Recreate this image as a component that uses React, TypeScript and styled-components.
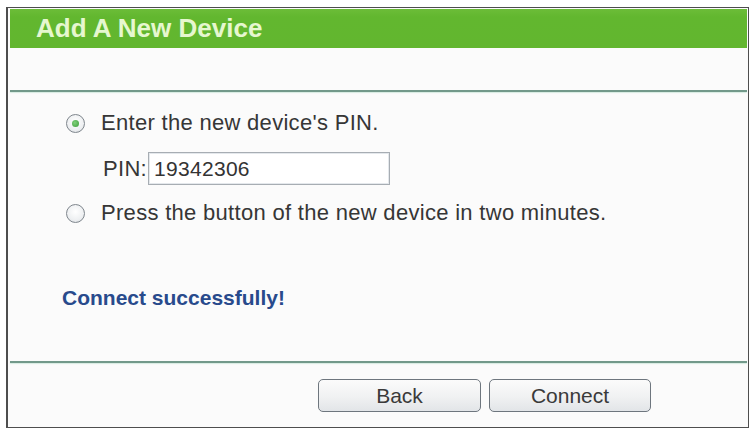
import React from "react";
import styled, { createGlobalStyle } from "styled-components";

const Global = createGlobalStyle`
  html, body { margin: 0; padding: 0; background: #ffffff; }
  body { font-family: "Liberation Sans", Arial, sans-serif; }
  * { box-sizing: border-box; }
`;

const Frame = styled.div`
  margin: 7px 0 0 6px;
  width: 743px;
  height: 421px;
  border: 1px solid #4e4e4e;
  border-left-width: 2px;
  padding: 1px 1px 0 2px;
  background: #fbfbfb;
  display: flex;
  flex-direction: column;
`;

const Header = styled.div`
  height: 39px;
  background: linear-gradient(#6cbd38, #62b72f 20%, #62b62f);
  display: flex;
  align-items: center;
  padding-left: 26px;
  color: #e6f7cf;
  font-size: 26px;
  font-weight: bold;
`;

const Spacer = styled.div`
  height: 42px;
`;

const Rule = styled.div`
  height: 2px;
  background: #72998a;
  box-shadow: 0 1px 1px rgba(150, 210, 180, 0.35);
`;

const Content = styled.div`
  height: 269px;
  padding: 16px 0 0 56px;
  display: flex;
  flex-direction: column;
  color: #363636;
  font-size: 22px;
  letter-spacing: 0.3px;
`;

const OptionRow = styled.label<{ $mt?: number }>`
  display: flex;
  align-items: center;
  gap: 16px;
  height: 30px;
  margin-top: ${(p) => p.$mt ?? 0}px;
  cursor: pointer;
`;

const Radio = styled.span<{ $checked?: boolean }>`
  width: 19px;
  height: 19px;
  border-radius: 50%;
  border: 1.5px solid #7f868d;
  background: radial-gradient(circle at 50% 40%, #ffffff 0%, #eef0f2 60%, #d6dade 100%);
  display: flex;
  align-items: center;
  justify-content: center;
  flex: none;
  &::after {
    content: "";
    width: 7px;
    height: 7px;
    border-radius: 50%;
    background: ${(p) => (p.$checked ? "radial-gradient(circle at 40% 40%, #7fd07a, #3c9d3a)" : "transparent")};
  }
`;

const PinRow = styled.div`
  display: flex;
  align-items: center;
  margin: 14px 0 0 37px;
  height: 33px;
`;

const PinLabel = styled.span`
  width: 45px;
`;

const PinInput = styled.input`
  width: 242px;
  height: 33px;
  border: 1px solid #a7adb3;
  box-shadow: inset 0 0 0 1px #e4e8ec;
  background: #ffffff;
  font-family: "Liberation Sans", Arial, sans-serif;
  font-size: 21px;
  letter-spacing: 0.3px;
  color: #333333;
  padding: 0 0 0 5px;
  outline: none;
`;

const Status = styled.div`
  margin: 55px 0 0 -4px;
  height: 30px;
  display: flex;
  align-items: center;
  color: #284a8c;
  font-size: 21px;
  font-weight: bold;
  letter-spacing: 0;
`;

const Footer = styled.div`
  flex: 1;
  display: flex;
  align-items: flex-start;
  gap: 8px;
  padding: 16px 0 0 308px;
`;

const Button = styled.button<{ $w: number }>`
  width: ${(p) => p.$w}px;
  height: 33px;
  border: 1.5px solid #6e767e;
  border-radius: 5px;
  background: linear-gradient(#fbfbfb, #f0f1f2 55%, #e2e5e8);
  font-family: "Liberation Sans", Arial, sans-serif;
  font-size: 21px;
  color: #3a3a3a;
  padding: 0;
  cursor: pointer;
`;

export default function App() {
  return (
    <>
      <Global />
      <Frame>
        <Header>Add A New Device</Header>
        <Spacer />
        <Rule />
        <Content>
          <OptionRow>
            <Radio $checked />
            Enter the new device's PIN.
          </OptionRow>
          <PinRow>
            <PinLabel>PIN:</PinLabel>
            <PinInput defaultValue="19342306" />
          </PinRow>
          <OptionRow $mt={13}>
            <Radio />
            Press the button of the new device in two minutes.
          </OptionRow>
          <Status>Connect successfully!</Status>
        </Content>
        <Rule />
        <Footer>
          <Button $w={163}>Back</Button>
          <Button $w={162}>Connect</Button>
        </Footer>
      </Frame>
    </>
  );
}
